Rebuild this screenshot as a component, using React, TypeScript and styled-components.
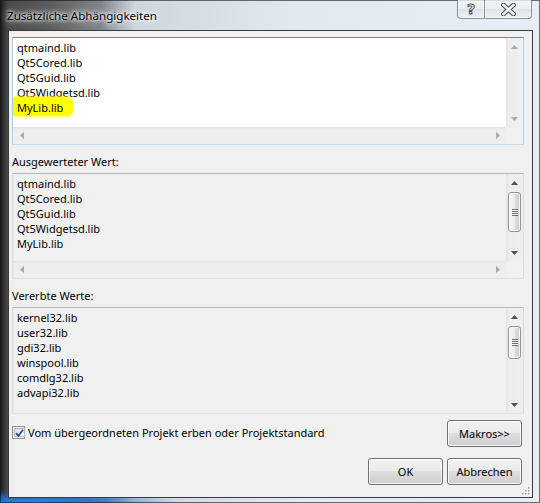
import React from "react";
import styled, { createGlobalStyle } from "styled-components";

const Global = createGlobalStyle`
  html, body { margin: 0; padding: 0; background: #fff; }
  body {
    font-family: "Noto Sans", "Open Sans", sans-serif;
    font-size: 11px;
    color: #000;
  }
  #root { width: 540px; height: 503px; }
`;

const Window = styled.div`
  position: relative;
  width: 540px;
  height: 503px;
  box-sizing: border-box;
  display: flex;
  flex-direction: column;
  padding: 0 7px 5px 8px;
  overflow: hidden;
  background:
    radial-gradient(ellipse 150px 14px at 30px 503px, rgba(40, 140, 240, 1) 0%, rgba(30, 110, 220, 0.7) 45%, rgba(0, 0, 0, 0) 100%),
    linear-gradient(to right, #161616 0, #2e2e2e 3px, #4a4a4a 8px, #5c5c5c 50px, #80848a 100px, #cfd6de 135px, #e3e9f0 300px, #e8eef5 100%);
  box-shadow: inset 0 0 0 1px rgba(20, 20, 20, 0.6);
`;

const TitleBar = styled.div`
  flex: none;
  height: 30px;
  display: flex;
  justify-content: space-between;
  align-items: flex-start;
`;

const Title = styled.div`
  margin: 8px 0 0 -1px;
  font-size: 11.6px;
  line-height: 15px;
  text-shadow: 0 0 5px #fff, 0 0 8px rgba(255, 255, 255, 0.9), 0 0 3px #fff;
`;

const Captions = styled.div`
  display: flex;
  margin-right: 1px;
  height: 19px;
`;

const CaptionButton = styled.div<{ $w: number; $first?: boolean; $last?: boolean }>`
  width: ${(p) => p.$w}px;
  height: 19px;
  box-sizing: border-box;
  display: flex;
  align-items: center;
  justify-content: center;
  border: 1px solid rgba(60, 66, 74, 0.55);
  border-top: none;
  border-left-width: ${(p) => (p.$first ? 1 : 0)}px;
  border-radius: ${(p) => (p.$first ? "0 0 0 4px" : p.$last ? "0 0 4px 0" : "0")};
  background: linear-gradient(
    to bottom,
    rgba(255, 255, 255, 0.45) 0%,
    rgba(235, 240, 245, 0.35) 50%,
    rgba(200, 208, 216, 0.35) 50%,
    rgba(240, 244, 248, 0.55) 100%
  );
  box-shadow: inset 0 0 0 1px rgba(255, 255, 255, 0.55);
`;

const HelpGlyph = styled.span`
  font-family: "DejaVu Sans", sans-serif;
  font-weight: bold;
  font-size: 14px;
  line-height: 14px;
  color: #f4f4f4;
  -webkit-text-stroke: 0.9px #4a4e55;
`;

const Client = styled.div`
  position: relative;
  flex: 1;
  display: flex;
  flex-direction: column;
  background: #f0f0f0;
  border: 1px solid #3c3c3c;
  padding: 6px 8px 0 3px;
`;

const Label = styled.div`
  margin-top: 9px;
  height: 16px;
  line-height: 16px;
  padding-bottom: 3px;
`;

const Box = styled.div<{ $h: number; $focused?: boolean; $readOnly?: boolean; $hscroll?: boolean }>`
  height: ${(p) => p.$h}px;
  box-sizing: border-box;
  border: 1px solid;
  border-color: ${(p) =>
    p.$focused ? "#5b8cb6 #b4cde4 #c4dbee #b4cde4" : "#b6b8bc #d8dadf #e0e3e8 #d8dadf"};
  background: ${(p) => (p.$readOnly ? "#f0f0f0" : "#fff")};
  display: grid;
  grid-template-columns: 1fr 17px;
  grid-template-rows: ${(p) => (p.$hscroll ? "1fr 17px" : "1fr")};
  overflow: hidden;
`;

const Lines = styled.div`
  padding: 2px 4px;
  line-height: 15px;
  overflow: hidden;
  white-space: nowrap;
`;

const Line = styled.div``;

const Marker = styled.span`
  display: inline-block;
  background: #ffff00;
  padding: 3px 10px 1px 4px;
  margin: -3px -10px -1px -4px;
  border-radius: 2px 7px 6px 3px;
  box-shadow: 0 0 1px 1px rgba(255, 255, 0, 0.6);
`;

const VScroll = styled.div`
  display: flex;
  flex-direction: column;
  background: linear-gradient(to right, #e4e4e4 0, #ededed 3px, #efefef 100%);
`;

const HScroll = styled.div`
  display: flex;
  flex-direction: row;
  background: linear-gradient(to bottom, #e4e4e4 0, #ededed 3px, #efefef 100%);
`;

const Corner = styled.div`
  background: #f0f0f0;
`;

const ArrowCell = styled.div`
  flex: none;
  width: 17px;
  height: 17px;
  display: flex;
  align-items: center;
  justify-content: center;
`;

const Track = styled.div`
  flex: 1;
  display: flex;
  flex-direction: column;
  align-items: center;
`;

const Thumb = styled.div<{ $h: number }>`
  width: 13px;
  height: ${(p) => p.$h}px;
  box-sizing: border-box;
  margin-top: 1px;
  border: 1px solid #959595;
  border-radius: 3px;
  background: linear-gradient(to right, #f7f7f7 0%, #ececec 50%, #dcdcdc 51%, #d0d0d0 100%);
  box-shadow: inset 0 0 0 1px rgba(255, 255, 255, 0.7);
  display: flex;
  align-items: center;
  justify-content: center;
`;

const Grip = styled.div`
  width: 6px;
  height: 7px;
  background: repeating-linear-gradient(to bottom, #6f6f6f 0, #6f6f6f 1px, #f4f4f4 1px, #f4f4f4 2px);
`;

const BottomRow = styled.div`
  margin-top: 6px;
  display: flex;
  justify-content: space-between;
  align-items: flex-start;
  padding-right: 2px;
`;

const CheckLabel = styled.label`
  margin-top: 5px;
  display: flex;
  align-items: center;
  gap: 3px;
  line-height: 15px;
`;

const CheckBox = styled.span`
  width: 13px;
  height: 13px;
  box-sizing: border-box;
  border: 1px solid #8e8f8f;
  background: #f4f4f4;
  padding: 1px;
  display: flex;
`;

const CheckInner = styled.span`
  flex: 1;
  border: 1px solid #b4b9c0;
  background: linear-gradient(135deg, #d6d9de 0%, #eef0f2 60%, #fbfbfb 100%);
  display: flex;
  align-items: center;
  justify-content: center;
`;

const ButtonRow = styled.div`
  margin-top: 11px;
  display: flex;
  justify-content: flex-end;
  gap: 4px;
  padding-right: 2px;
`;

const Button = styled.button`
  width: 75px;
  height: 27px;
  box-sizing: border-box;
  padding: 0 0 1px;
  border: 1px solid #707070;
  border-radius: 3px;
  background: linear-gradient(to bottom, #f2f2f2 0%, #ebebeb 50%, #dddddd 50%, #cfcfcf 100%);
  box-shadow: inset 0 0 0 1px rgba(255, 255, 255, 0.8);
  font: inherit;
  color: #000;
`;

const SizeGrip = styled.svg`
  position: absolute;
  right: 1px;
  bottom: 1px;
`;

type Dir = "up" | "down" | "left" | "right";

const Arrow = ({ dir, color }: { dir: Dir; color: string }) => {
  const vertical = dir === "up" || dir === "down";
  const pts: Record<Dir, string> = {
    up: "0,4 3.5,0 7,4",
    down: "0,0 7,0 3.5,4",
    left: "4,0 4,7 0,3.5",
    right: "0,0 0,7 4,3.5",
  };
  return (
    <svg width={vertical ? 7 : 4} height={vertical ? 4 : 7} viewBox={vertical ? "0 0 7 4" : "0 0 4 7"}>
      <polygon points={pts[dir]} fill={color} />
    </svg>
  );
};

const VBar = ({ thumb, color }: { thumb?: number; color: string }) => (
  <VScroll>
    <ArrowCell>
      <Arrow dir="up" color={color} />
    </ArrowCell>
    <Track>
      {thumb ? (
        <Thumb $h={thumb}>
          <Grip />
        </Thumb>
      ) : null}
    </Track>
    <ArrowCell>
      <Arrow dir="down" color={color} />
    </ArrowCell>
  </VScroll>
);

const HBar = ({ color }: { color: string }) => (
  <HScroll>
    <ArrowCell>
      <Arrow dir="left" color={color} />
    </ArrowCell>
    <Track />
    <ArrowCell>
      <Arrow dir="right" color={color} />
    </ArrowCell>
  </HScroll>
);

const own = ["qtmaind.lib", "Qt5Cored.lib", "Qt5Guid.lib", "Qt5Widgetsd.lib", "MyLib.lib"];
const inherited = ["kernel32.lib", "user32.lib", "gdi32.lib", "winspool.lib", "comdlg32.lib", "advapi32.lib"];

export default function App() {
  return (
    <>
      <Global />
      <Window>
        <TitleBar>
          <Title>Zusätzliche Abhängigkeiten</Title>
          <Captions>
            <CaptionButton $w={28} $first>
              <HelpGlyph>?</HelpGlyph>
            </CaptionButton>
            <CaptionButton $w={47} $last>
              <svg width="15" height="13" viewBox="0 0 15 13">
                <path d="M2.5 2 L12.5 11 M12.5 2 L2.5 11" stroke="#4a4e55" strokeWidth="4.6" strokeLinecap="square" />
                <path d="M2.5 2 L12.5 11 M12.5 2 L2.5 11" stroke="#f2f2f2" strokeWidth="2.6" strokeLinecap="square" />
              </svg>
            </CaptionButton>
          </Captions>
        </TitleBar>
        <Client>
          <Box $h={108} $focused $hscroll>
            <Lines>
              {own.map((l, i) => (
                <Line key={l}>{i === own.length - 1 ? <Marker>{l}</Marker> : l}</Line>
              ))}
            </Lines>
            <VBar color="#a8a8a8" />
            <HBar color="#a8a8a8" />
            <Corner />
          </Box>

          <Label>Ausgewerteter Wert:</Label>
          <Box $h={106} $readOnly $hscroll>
            <Lines>
              {own.map((l) => (
                <Line key={l}>{l}</Line>
              ))}
            </Lines>
            <VBar thumb={40} color="#4f4f4f" />
            <HBar color="#a8a8a8" />
            <Corner />
          </Box>

          <Label>Vererbte Werte:</Label>
          <Box $h={107} $readOnly>
            <Lines>
              {inherited.map((l) => (
                <Line key={l}>{l}</Line>
              ))}
            </Lines>
            <VBar thumb={33} color="#4f4f4f" />
          </Box>

          <BottomRow>
            <CheckLabel>
              <CheckBox>
                <CheckInner>
                  <svg width="9" height="8" viewBox="0 0 9 8">
                    <path d="M1 4.2 L3.4 6.8 L8 0.8" fill="none" stroke="#2c4c8c" strokeWidth="1.8" />
                  </svg>
                </CheckInner>
              </CheckBox>
              Vom übergeordneten Projekt erben oder Projektstandard
            </CheckLabel>
            <Button>Makros&gt;&gt;</Button>
          </BottomRow>

          <ButtonRow>
            <Button>OK</Button>
            <Button>Abbrechen</Button>
          </ButtonRow>

          <SizeGrip width="10" height="10" viewBox="0 0 10 10">
            {[
              [8, 2],
              [8, 5],
              [5, 5],
              [8, 8],
              [5, 8],
              [2, 8],
            ].map(([x, y]) => (
              <g key={`${x}-${y}`}>
                <rect x={x} y={y} width="1.5" height="1.5" fill="#fff" />
                <rect x={x - 1} y={y - 1} width="1.5" height="1.5" fill="#a0a0a0" />
              </g>
            ))}
          </SizeGrip>
        </Client>
      </Window>
    </>
  );
}
